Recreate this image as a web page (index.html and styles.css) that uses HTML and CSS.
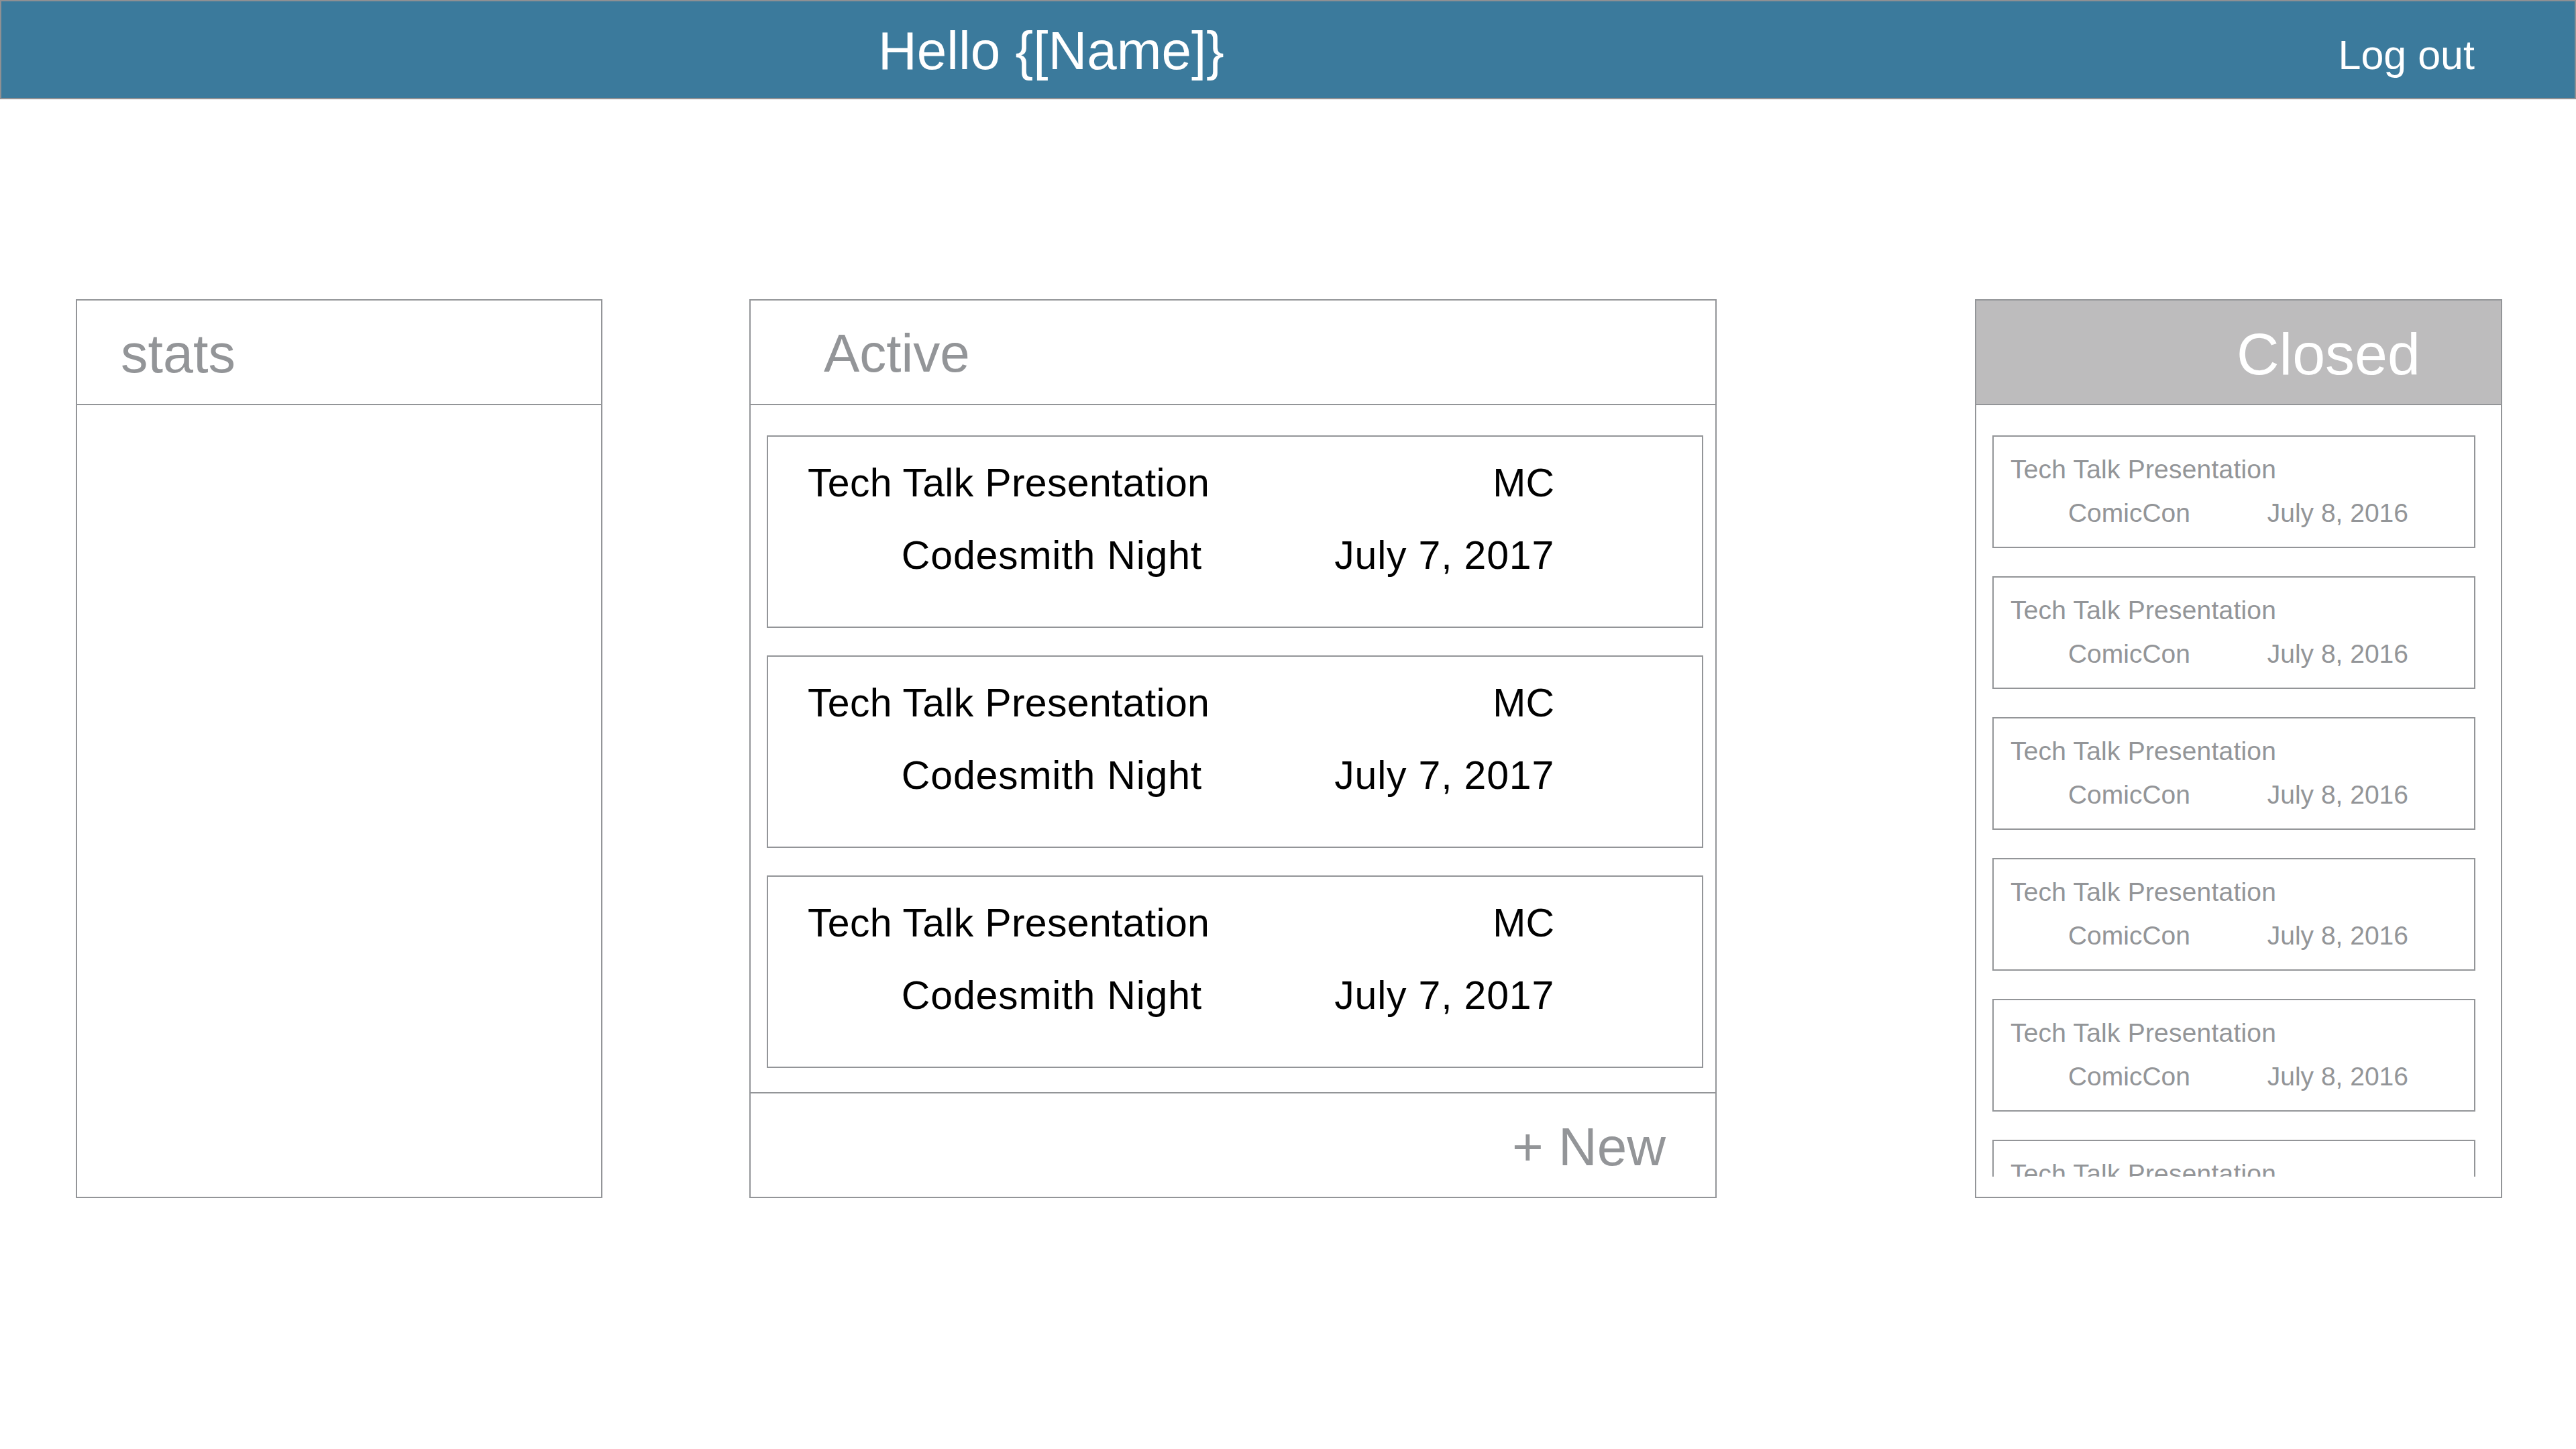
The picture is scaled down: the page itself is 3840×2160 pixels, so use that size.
FILE: index.html
```html
<!DOCTYPE html>
<html lang="en">
<head>
<meta charset="utf-8">
<title>Dashboard</title>
<link rel="stylesheet" href="styles.css">
</head>
<body>
<header class="topbar">
  <span class="greeting">Hello {[Name]}</span>
  <a class="logout">Log out</a>
</header>
<main class="board">
  <section class="panel panel-stats">
    <div class="panel-head">stats</div>
    <div class="panel-body"></div>
  </section>
  <section class="panel panel-active">
    <div class="panel-head">Active</div>
    <div class="active-list">
      <div class="card">
        <span class="title">Tech Talk Presentation</span><span class="role">MC</span>
        <span class="event">Codesmith Night</span><span class="date">July 7, 2017</span>
      </div>
      <div class="card">
        <span class="title">Tech Talk Presentation</span><span class="role">MC</span>
        <span class="event">Codesmith Night</span><span class="date">July 7, 2017</span>
      </div>
      <div class="card">
        <span class="title">Tech Talk Presentation</span><span class="role">MC</span>
        <span class="event">Codesmith Night</span><span class="date">July 7, 2017</span>
      </div>
    </div>
    <div class="panel-foot">+ New</div>
  </section>
  <section class="panel panel-closed">
    <div class="panel-head closed-head">Closed</div>
    <div class="closed-list">
      <div class="closed-card"><span class="c-title">Tech Talk Presentation</span><span class="c-event">ComicCon</span><span class="c-date">July 8, 2016</span></div>
      <div class="closed-card"><span class="c-title">Tech Talk Presentation</span><span class="c-event">ComicCon</span><span class="c-date">July 8, 2016</span></div>
      <div class="closed-card"><span class="c-title">Tech Talk Presentation</span><span class="c-event">ComicCon</span><span class="c-date">July 8, 2016</span></div>
      <div class="closed-card"><span class="c-title">Tech Talk Presentation</span><span class="c-event">ComicCon</span><span class="c-date">July 8, 2016</span></div>
      <div class="closed-card"><span class="c-title">Tech Talk Presentation</span><span class="c-event">ComicCon</span><span class="c-date">July 8, 2016</span></div>
      <div class="closed-card"><span class="c-title">Tech Talk Presentation</span><span class="c-event">ComicCon</span><span class="c-date">July 8, 2016</span></div>
    </div>
  </section>
</main>
</body>
</html>
```
FILE: styles.css
```css
html, body {
  margin: 0;
  padding: 0;
  background: #ffffff;
  font-family: "Liberation Sans", Arial, sans-serif;
}

.topbar {
  box-sizing: border-box;
  height: 148px;
  border: 2px solid #8f9093;
  background: #3b7a9c;
  color: #ffffff;
  display: flex;
  align-items: baseline;
  padding: 34px 149px 0 1307px;
}

.greeting {
  font-size: 80px;
  line-height: 80px;
}

.logout {
  margin-left: auto;
  font-size: 61px;
  line-height: 80px;
  cursor: pointer;
}

.board {
  display: flex;
  align-items: flex-start;
  padding: 298px 0 0 113px;
}

.panel {
  box-sizing: border-box;
  height: 1340px;
  border: 2px solid #939598;
  display: flex;
  flex-direction: column;
  background: #ffffff;
}

.panel-stats {
  width: 785px;
  margin-right: 219px;
}

.panel-active {
  width: 1442px;
  margin-right: 385px;
}

.panel-closed {
  width: 786px;
}

.panel-head {
  flex: none;
  height: 154px;
  border-bottom: 2px solid #939598;
  font-size: 80px;
  line-height: 158px;
  color: #939598;
  white-space: nowrap;
}

.panel-stats .panel-head {
  padding-left: 65px;
  font-size: 81px;
}

.panel-active .panel-head {
  padding-left: 109px;
}

.closed-head {
  background: #bdbcbd;
  color: #ffffff;
  text-align: right;
  font-size: 88px;
  line-height: 159px;
  padding-right: 120px;
}

.panel-body {
  flex: 1;
}

.active-list {
  flex: 1;
  display: flex;
  flex-direction: column;
  gap: 41px;
  padding: 45px 18px 36px 24px;
}

.card {
  flex: none;
  box-sizing: border-box;
  height: 287px;
  border: 2px solid #939598;
  padding: 15px 220px 0 59px;
  display: grid;
  grid-template-columns: 600px 1fr;
  grid-auto-rows: 108px;
  font-size: 59px;
  line-height: 108px;
  color: #000000;
  white-space: nowrap;
}

.card .title {
  letter-spacing: 0.3px;
}

.card .event,
.card .date {
  letter-spacing: 0.8px;
}

.card .event {
  text-align: right;
  padding-right: 12px;
}

.card .role,
.card .date {
  text-align: right;
}

.panel-foot {
  flex: none;
  height: 154px;
  border-top: 2px solid #939598;
  font-size: 80px;
  line-height: 159px;
  color: #939598;
  text-align: right;
  padding-right: 74px;
  overflow: hidden;
}

.closed-list {
  flex: 1;
  min-height: 0;
  overflow: hidden;
  display: flex;
  flex-direction: column;
  gap: 42px;
  padding-top: 45px;
  margin: 0 38px 30px 24px;
}

.closed-card {
  flex: none;
  box-sizing: border-box;
  height: 168px;
  border: 2px solid #939598;
  padding: 16px 0 0 25px;
  display: grid;
  grid-template-columns: 268px 325px;
  grid-auto-rows: 65px;
  font-size: 39px;
  line-height: 65px;
  color: #939598;
  white-space: nowrap;
}

.c-title {
  grid-column: 1 / -1;
  letter-spacing: 0.2px;
}

.c-event,
.c-date {
  text-align: right;
}
```
